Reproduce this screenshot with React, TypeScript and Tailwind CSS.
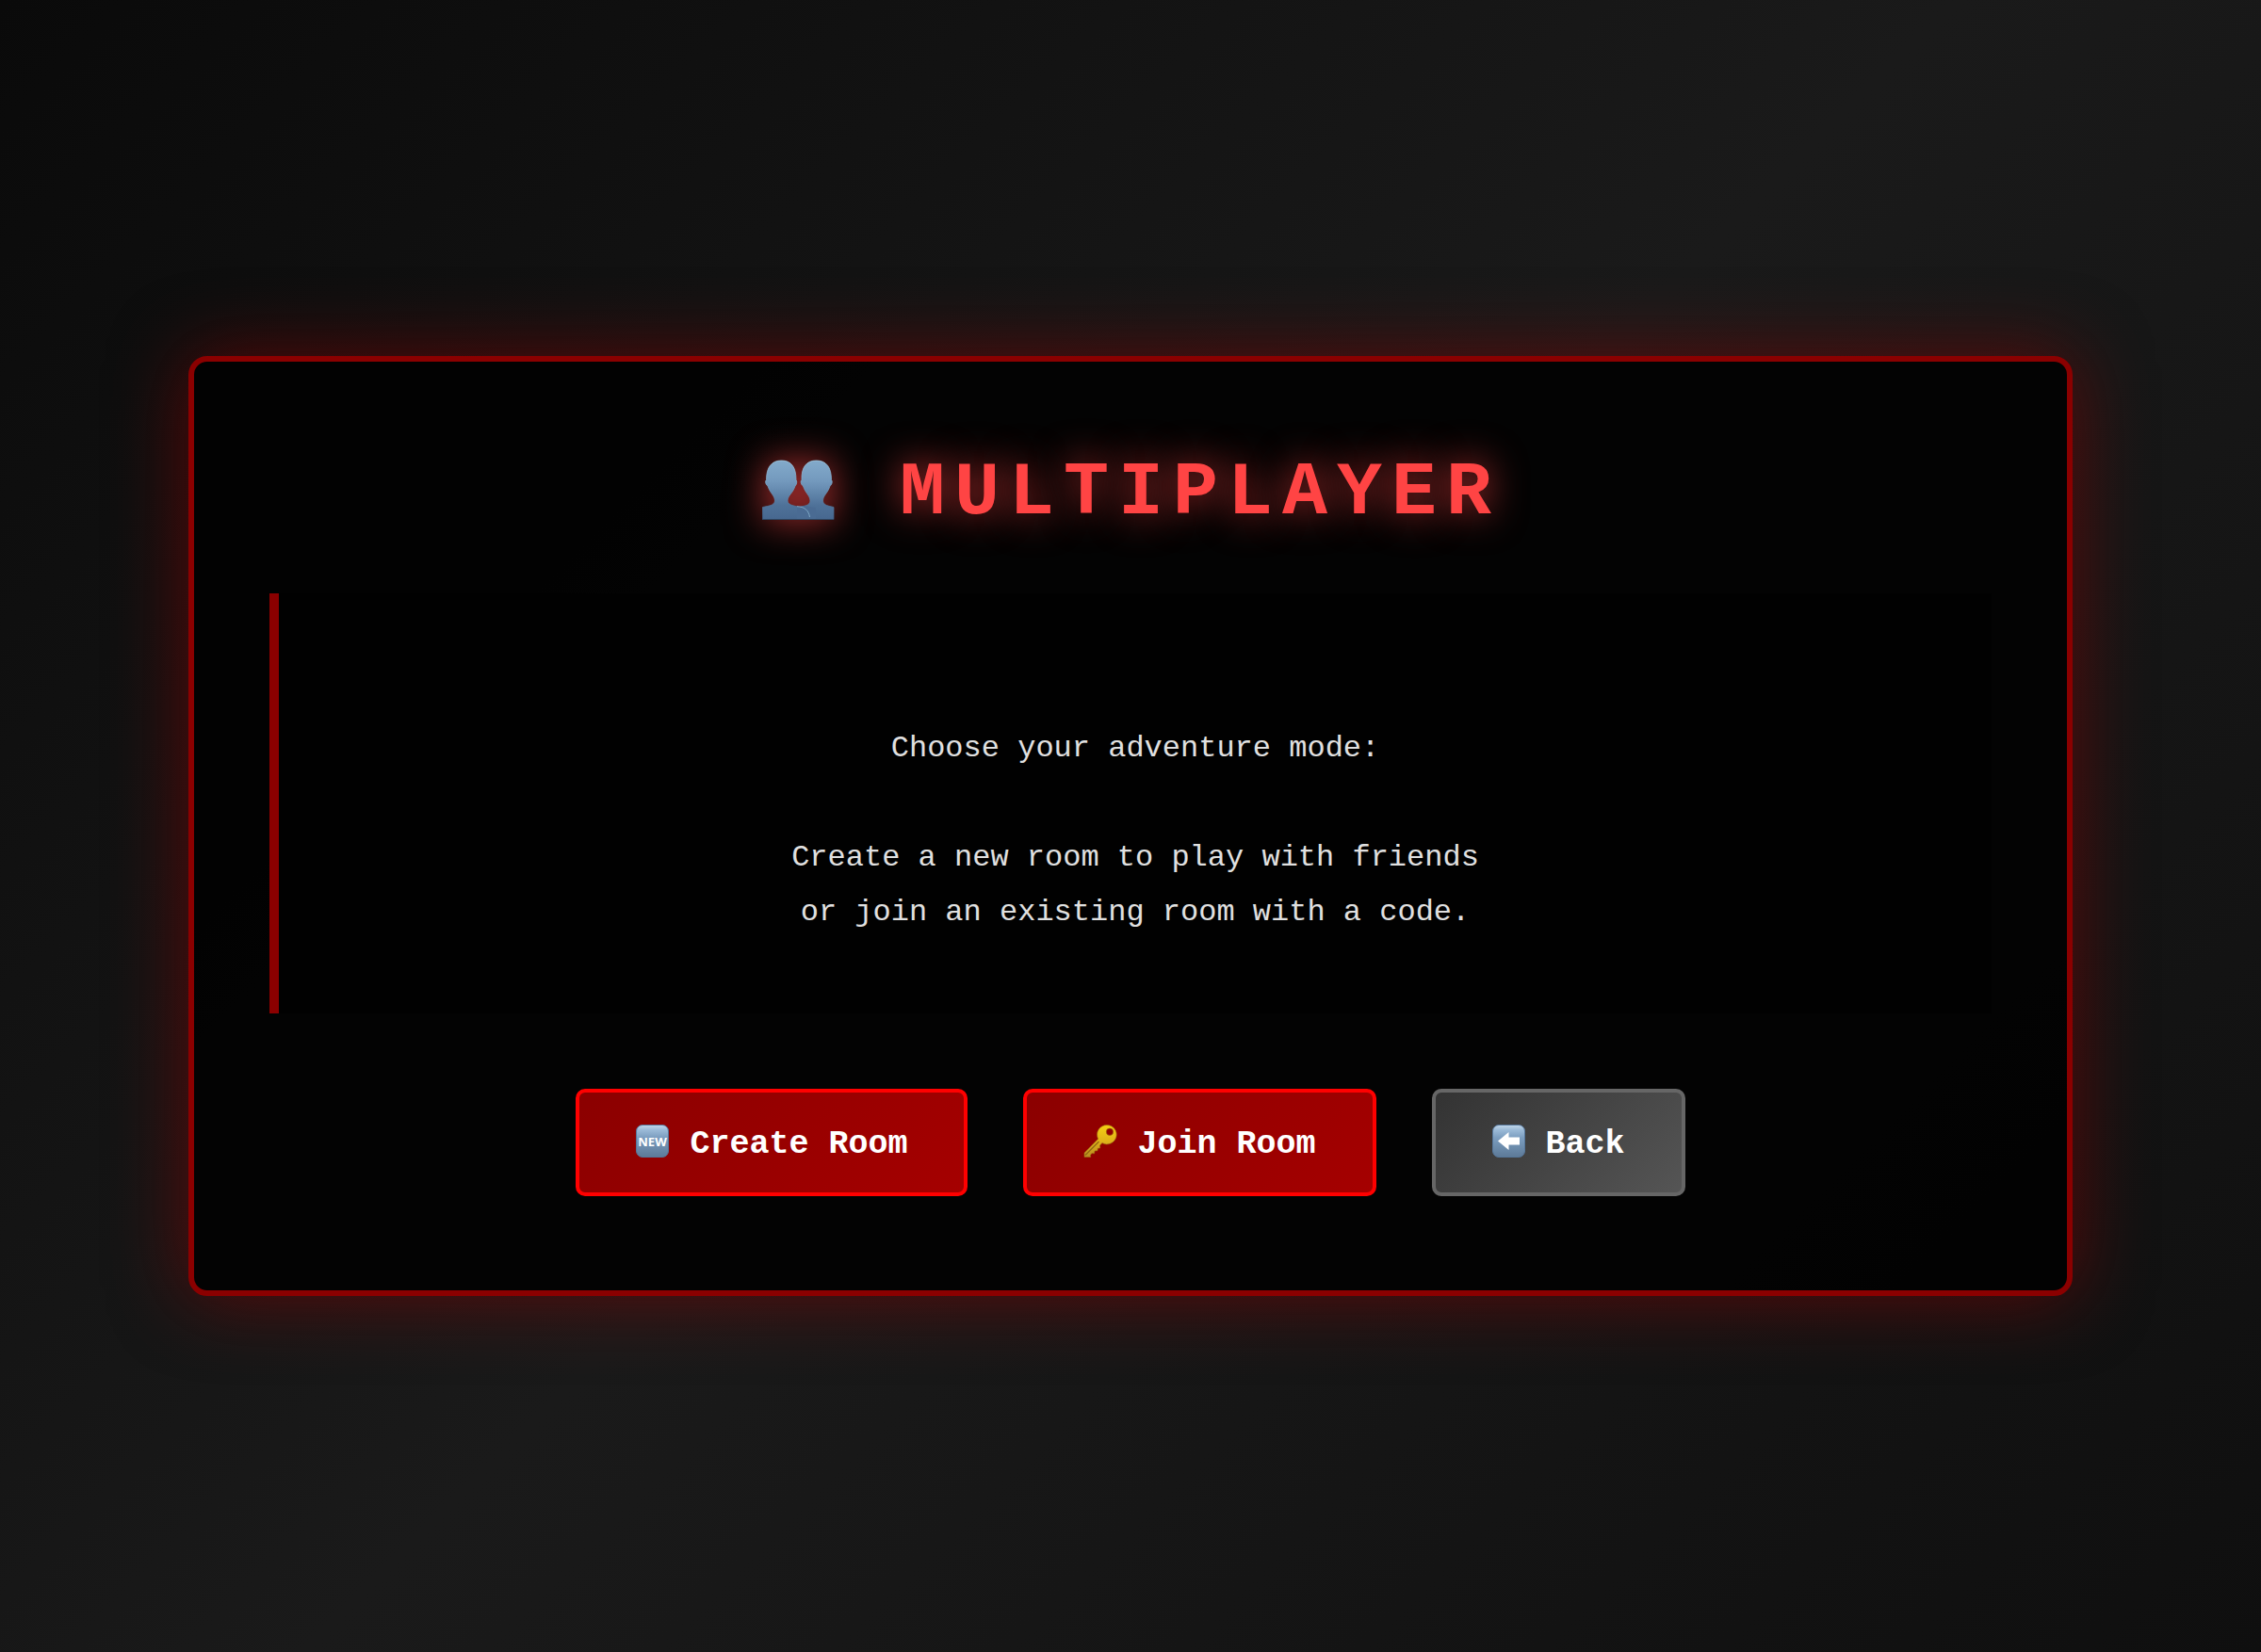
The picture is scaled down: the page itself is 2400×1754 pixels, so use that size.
import type { ReactNode } from "react";

function PlayersIcon() {
  return (
    <svg
      viewBox="0 0 80 80"
      className="mb-[10px] size-20 shrink-0 overflow-visible drop-shadow-[0_0_20px_rgba(255,68,68,0.8)]"
      aria-hidden="true"
    >
      <defs>
        <linearGradient id="bust" gradientUnits="userSpaceOnUse" x1="0" y1="10" x2="0" y2="73">
          <stop offset="0" stopColor="#83aacb" />
          <stop offset="0.35" stopColor="#7399bd" />
          <stop offset="0.75" stopColor="#4f7299" />
          <stop offset="1" stopColor="#47678f" />
        </linearGradient>
        <linearGradient id="bustEdge" gradientUnits="userSpaceOnUse" x1="0" y1="10" x2="0" y2="73">
          <stop offset="0" stopColor="#a3cfe6" />
          <stop offset="0.5" stopColor="#6d99bb" />
          <stop offset="1" stopColor="#38557a" />
        </linearGradient>
      </defs>
      <g fill="url(#bust)" stroke="url(#bustEdge)" strokeWidth="0.8">
        <path d="M40 72.500V59.500c8-1.500 12-1.500 13-6.500 0-6-5-8-7.500-16-2-1-3.300-5-1.500-6.500C43.500 17 49 10 59.500 10S75.500 17 75.500 30.500c1.500 1.500.5 5.500-1.500 6.500-2.500 8-7.500 10-7.500 16 1 5 6 5 11.500 6.500v13z" />
        <path d="M2.500 72.500V59.500c6.500-1.500 12-1.500 13-6.500 0-6-5-8-7.500-16-2-1-3.300-5-1.500-6.500C6.500 17 12 10 22.500 10S38 17 38 30.500c1.500 1.500.5 5.500-1 6.500-2.500 8-8 10-8 16 1 5 8 5 13 6.500 7 2.500 10 7 10 13z" />
      </g>
      <path d="M39 72v-12.500l8-1.500 12 2v12z" fill="#4a6b93" />
      <path d="M39 58.700c8 .3 12.500 4.300 13.500 11.300" fill="none" stroke="#83aecb" strokeWidth="0.900" />
      <path d="M2 72.500h76" stroke="#2e4763" strokeWidth="1" />
    </svg>
  );
}

function Tile({ id, children }: { id: string; children: ReactNode }) {
  return (
    <svg viewBox="0 0 36 36" className="mb-[6px] size-9 shrink-0" aria-hidden="true">
      <defs>
        <linearGradient id={id} x1="0" y1="0" x2="0" y2="1">
          <stop offset="0" stopColor="#c3d8ea" />
          <stop offset="0.160" stopColor="#9ab9d7" />
          <stop offset="0.400" stopColor="#7b9dbf" />
          <stop offset="1" stopColor="#5d7a98" />
        </linearGradient>
      </defs>
      <rect x="0.500" y="0.500" width="34" height="34" rx="6.500" fill={`url(#${id})`} stroke="#56779b" />
      {children}
    </svg>
  );
}

function NewIcon() {
  return (
    <Tile id="newTile">
      <text x="17.500" y="22.500" textAnchor="middle" fill="#fff" className="font-['Noto_Sans','Open_Sans',sans-serif] text-[13px] font-bold">
        NEW
      </text>
    </Tile>
  );
}

function BackIcon() {
  return (
    <Tile id="backTile">
      <path d="M6 17.500 17.500 8v5.500H29v8H17.500V27z" fill="#fff" />
    </Tile>
  );
}

function KeyIcon() {
  return (
    <svg viewBox="0 0 36 36" className="mb-[6px] size-9 shrink-0" aria-hidden="true">
      <defs>
        <linearGradient id="gold" x1="0" y1="0" x2="0" y2="1">
          <stop offset="0" stopColor="#f5cf12" />
          <stop offset="0.500" stopColor="#e0b219" />
          <stop offset="1" stopColor="#b98d22" />
        </linearGradient>
      </defs>
      <path
        fillRule="evenodd"
        fill="url(#gold)"
        stroke="#9a6a10"
        strokeWidth="0.600"
        d="M25 .5a10.200 10.200 0 1 1-5 19.100L17.500 22l.2 3-2.500.2-.2 2.600-3 .2-.4 2.800-2.600-.2-1.500 1.700.2 2.200H1v-4.500l14.600-14.800A10.200 10.200 0 0 1 25 .5zM28 4a3.700 3.700 0 1 0 0 7.400A3.700 3.700 0 0 0 28 4z"
      />
      <path d="M2 32.500 16.500 18" stroke="#8f6614" strokeWidth="1.200" fill="none" />
    </svg>
  );
}

const tones = {
  danger: "border-[#ff0000] from-[#8b0000] to-[#a50000]",
  muted: "border-[#666666] from-[#333333] to-[#555555]",
};

function MenuButton({ tone, icon, children }: { tone: keyof typeof tones; icon: ReactNode; children: ReactNode }) {
  return (
    <button
      type="button"
      className={`flex cursor-pointer items-center rounded-[10px] border-4 bg-linear-135 px-[60px] pt-[34px] pb-[30px] text-[35px] leading-[42px] font-bold whitespace-pre text-white ${tones[tone]}`}
    >
      {icon}
      <span> {children}</span>
    </button>
  );
}

export default function App() {
  return (
    <div className="flex min-h-screen items-center justify-center bg-linear-135 from-[#0a0a0a] via-[#1a1a1a] to-[#0f0f0f] p-10 font-['Courier_New','Liberation_Mono',monospace]">
      <main className="w-full max-w-[2000px] rounded-[20px] border-[6px] border-[#8b0000] bg-black/85 p-20 text-center shadow-[0_0_80px_rgba(139,0,0,0.6)]">
        <h1 className="mb-[60px] flex items-center justify-center pt-[14px] text-[80px] leading-[92px] font-bold tracking-[10px] whitespace-pre text-[#ff4444] [text-shadow:0_0_40px_rgba(255,68,68,0.8)]">
          <PlayersIcon />
          <span className="ml-[10px]"> MULTIPLAYER</span>
        </h1>
        <p className="mb-20 border-l-[10px] border-[#8b0000] bg-black/50 px-20 py-[78px] text-[32px] leading-[58px] whitespace-pre-wrap text-[#e0e0e0]">
          {"\nChoose your adventure mode:\n\nCreate a new room to play with friends\nor join an existing room with a code."}
        </p>
        <div className="mb-5 flex flex-wrap justify-center gap-[59px]">
          <MenuButton tone="danger" icon={<NewIcon />}>Create Room</MenuButton>
          <MenuButton tone="danger" icon={<KeyIcon />}>Join Room</MenuButton>
          <MenuButton tone="muted" icon={<BackIcon />}>Back</MenuButton>
        </div>
      </main>
    </div>
  );
}
